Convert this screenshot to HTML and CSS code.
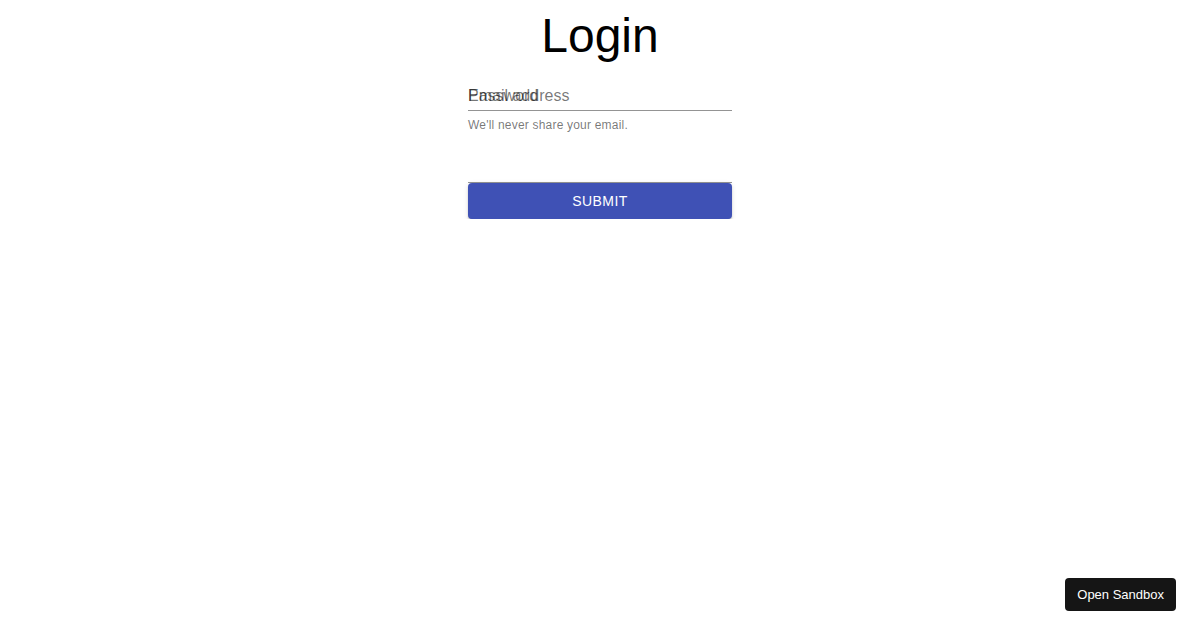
FILE: index.html
```html
<!DOCTYPE html>
<html lang="en">
<head>
<meta charset="utf-8">
<title>Login</title>
<link rel="stylesheet" href="styles.css">
</head>
<body>
<main class="page">
  <h1 class="title">Login</h1>
  <form class="form">
    <div class="field field-email">
      <label class="label">Email address</label>
    </div>
    <p class="helper">We'll never share your email.</p>
    <div class="field field-password"></div>
    <label class="label label-overlap">Password</label>
    <button type="button" class="submit">SUBMIT</button>
  </form>
</main>
<button type="button" class="sandbox">Open Sandbox</button>
</body>
</html>
```
FILE: styles.css
```css
html, body {
  margin: 0;
  padding: 0;
  background: #fff;
  font-family: "Liberation Sans", Arial, sans-serif;
}

.page {
  padding-top: 8px;
}

.title {
  margin: 0;
  font-size: 48px;
  font-weight: normal;
  line-height: 56px;
  text-align: center;
  color: #000;
}

.form {
  position: relative;
  width: 264px;
  margin: 0 auto;
  padding-top: 22px;
}

.field {
  box-sizing: border-box;
  border-bottom: 1px solid rgba(0, 0, 0, 0.42);
}

.field-email {
  height: 25px;
}

.field-password {
  height: 52px;
}

.label {
  display: block;
  font-size: 16px;
  line-height: 19px;
  color: rgba(0, 0, 0, 0.54);
}

.label-overlap {
  position: absolute;
  left: 0;
  top: 22px;
}

.helper {
  margin: 7px 0 0;
  font-size: 12px;
  line-height: 14px;
  letter-spacing: 0.2px;
  color: rgba(0, 0, 0, 0.54);
}

.field-password {
  height: 51px;
}

.submit {
  display: block;
  width: 100%;
  height: 36px;
  margin: 0;
  padding: 0;
  border: 0;
  border-radius: 4px;
  background: #3f51b5;
  color: #fff;
  font-family: "Liberation Sans", Arial, sans-serif;
  font-size: 14px;
  letter-spacing: 0.4px;
  box-shadow: 0 3px 1px -2px rgba(0,0,0,0.2), 0 2px 2px 0 rgba(0,0,0,0.14), 0 1px 5px 0 rgba(0,0,0,0.12);
}

.sandbox {
  position: fixed;
  right: 24px;
  bottom: 19px;
  height: 33px;
  padding: 0 12px;
  border: 0;
  border-radius: 4px;
  background: #151515;
  color: #fff;
  font-family: "Liberation Sans", Arial, sans-serif;
  font-size: 13px;
}
```
